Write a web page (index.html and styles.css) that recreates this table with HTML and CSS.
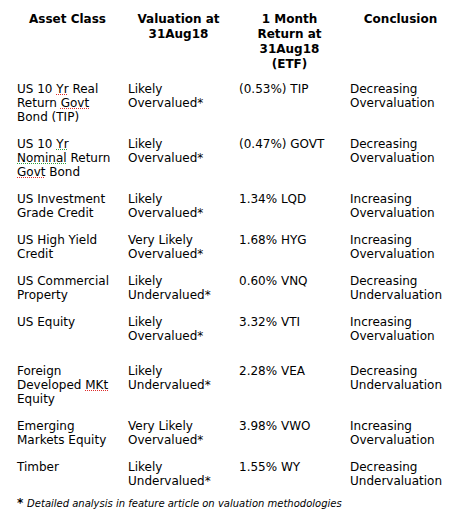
FILE: index.html
```html
<!DOCTYPE html>
<html lang="en">
<head>
    <meta charset="UTF-8">
    <title>Asset Class Valuation</title>
    <link rel="stylesheet" href="styles.css">
</head>
<body>
    <table class="valuation">
        <thead>
            <tr>
                <th>Asset Class</th>
                <th>Valuation at<br>31Aug18</th>
                <th>1 Month<br>Return at<br>31Aug18<br>(ETF)</th>
                <th>Conclusion</th>
            </tr>
        </thead>
        <tbody>
            <tr>
                <td>US 10 <span class="typo">Yr</span> Real Return <span class="typo">Govt</span> Bond (TIP)</td>
                <td>Likely Overvalued*</td>
                <td>(0.53%) TIP</td>
                <td>Decreasing Overvaluation</td>
            </tr>
            <tr>
                <td>US 10 <span class="grammar">Yr</span><br><span class="grammar">Nominal</span> Return <span class="typo">Govt</span> Bond</td>
                <td>Likely Overvalued*</td>
                <td>(0.47%) GOVT</td>
                <td>Decreasing Overvaluation</td>
            </tr>
            <tr>
                <td>US Investment Grade Credit</td>
                <td>Likely Overvalued*</td>
                <td>1.34% LQD</td>
                <td>Increasing Overvaluation</td>
            </tr>
            <tr>
                <td>US High Yield Credit</td>
                <td>Very Likely Overvalued*</td>
                <td>1.68% HYG</td>
                <td>Increasing Overvaluation</td>
            </tr>
            <tr>
                <td>US Commercial Property</td>
                <td>Likely Undervalued*</td>
                <td>0.60% VNQ</td>
                <td>Decreasing Undervaluation</td>
            </tr>
            <tr class="spaced">
                <td>US Equity</td>
                <td>Likely Overvalued*</td>
                <td>3.32% VTI</td>
                <td>Increasing Overvaluation</td>
            </tr>
            <tr>
                <td>Foreign Developed <span class="typo">MKt</span> Equity</td>
                <td>Likely Undervalued*</td>
                <td>2.28% VEA</td>
                <td>Decreasing Undervaluation</td>
            </tr>
            <tr>
                <td>Emerging Markets Equity</td>
                <td>Very Likely Overvalued*</td>
                <td>3.98% VWO</td>
                <td>Increasing Overvaluation</td>
            </tr>
            <tr class="last">
                <td>Timber</td>
                <td>Likely Undervalued*</td>
                <td>1.55% WY</td>
                <td>Decreasing Undervaluation</td>
            </tr>
        </tbody>
    </table>

    <p class="footnote"><strong>*</strong> <em>Detailed analysis in feature article on valuation methodologies</em></p>
</body>
</html>
```

FILE: styles.css
```css
body {
    font-family: "DejaVu Sans", Verdana, sans-serif;
    font-size: 12px;
    color: #000;
    background: #fff;
    margin: 0;
    padding: 10px 0 0 12px;
}
.valuation {
    width: 444px;
    table-layout: fixed;
    border-collapse: collapse;
}
.valuation th {
    font-weight: bold;
    text-align: center;
    vertical-align: top;
    line-height: 15px;
    padding: 2px 5px 10px;
}
.valuation td {
    vertical-align: top;
    line-height: 14px;
    padding: 0 5px 13px;
}
.valuation tr.spaced td {
    padding-bottom: 21px;
}
.valuation tr.last td {
    padding-bottom: 9px;
}
.typo,
.grammar {
    text-decoration: underline dotted #e02a2a;
    text-decoration-thickness: 1px;
    text-underline-offset: 1px;
}
.grammar {
    text-decoration-color: #2e9e3c;
}
.footnote {
    margin: 0;
    padding-left: 5px;
    line-height: 13px;
}
.footnote strong {
    font-size: 12px;
}
.footnote em {
    font-size: 10px;
}
```
